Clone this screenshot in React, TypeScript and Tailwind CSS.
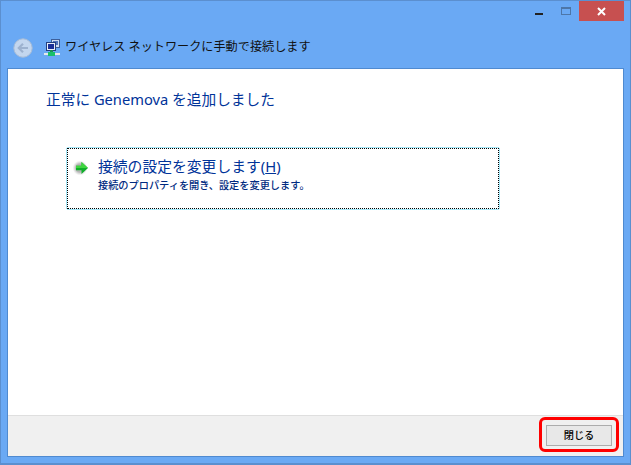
import React from 'react';

const font = { fontFamily: '"Noto Sans", "Noto Sans CJK JP", sans-serif' };

const NetworkIcon = () => (
  <svg width="16" height="17" viewBox="0 0 16 17" className="shrink-0">
    <rect x="7.5" y="0.5" width="8" height="8" fill="#cfdcf0" stroke="#3d5f9a" />
    <rect x="9" y="2" width="5" height="4" fill="#4f74bd" />
    <rect x="2.5" y="3.5" width="9" height="8" fill="#e8eef8" stroke="#24407f" />
    <rect x="4" y="5" width="6" height="5" fill="#1a2f96" />
    <rect x="6" y="11" width="3" height="3" fill="#1d8f58" />
    <rect x="0" y="14" width="16" height="2" fill="#e6e9ea" />
    <rect x="4" y="13" width="7" height="4" fill="#19c06a" />
  </svg>
);

const BackIcon = () => (
  <svg width="20" height="20" viewBox="0 0 20 20" className="shrink-0">
    <circle cx="10" cy="10" r="9.2" fill="#c3d6ee" stroke="#a8bcd6" />
    <path d="M15 10H6M10 5.8L5.8 10l4.2 4.2" fill="none" stroke="#9db2cf" strokeWidth="2.2" />
  </svg>
);

const GreenArrow = () => (
  <svg width="18" height="16" viewBox="0 0 18 16" className="shrink-0">
    <defs>
      <radialGradient id="arrowGlow">
        <stop offset="55%" stopColor="#8d8d8d" stopOpacity={0.65} />
        <stop offset="100%" stopColor="#bdbdbd" stopOpacity={0} />
      </radialGradient>
    </defs>
    <circle cx="7" cy="8" r="7.5" fill="url(#arrowGlow)" />
    <path d="M3 5.8h5.5V2L15 8l-6.5 6v-3.8H3z" fill="#0fae2a" />
    <path d="M3 5.8h5.5V2L15 8H3z" fill="#3fd63f" />
  </svg>
);

export default function App() {
  return (
    <div className="relative flex h-[465px] w-[631px] flex-col overflow-hidden border border-b-2 border-[#5b8fcf] bg-[#6aa9f4] pb-[6px] pl-[6px] pr-[6px]" style={font}>
      {/* window buttons */}
      <div className="flex h-[20px] shrink-0 items-start justify-end">
        <div className="mt-[12px] mr-[18px] h-[2px] w-[8px] bg-[#222222]" />
        <div className="mt-[6px] mr-[8px] h-[8px] w-[10px] border border-t-2 border-[#4d76a8]" />
        <div className="flex h-[20px] w-[45px] items-center justify-center bg-[#c75050]">
          <svg width="9" height="9" viewBox="0 0 9 9">
            <path d="M1 1l7 7M8 1L1 8" stroke="#ffffff" strokeWidth="2" />
          </svg>
        </div>
      </div>

      {/* header row */}
      <div className="flex h-[47px] shrink-0 items-center pt-[6px] pl-[6px]">
        <BackIcon />
        <div className="ml-[11px]"><NetworkIcon /></div>
        <span className="ml-[5px] text-[12.15px] whitespace-nowrap text-[#111111]">ワイヤレス ネットワークに手動で接続します</span>
      </div>

      {/* content */}
      <div className="flex flex-1 flex-col border border-[#4f8ad0] bg-white">
        <div className="flex-1 pt-[19px] pl-[38px]">
          <div className="text-[14.7px] leading-[22px] whitespace-nowrap text-[#003399]">正常に Genemova を追加しました</div>
          <div className="mt-[37px] ml-[20px] w-[434px] rounded-[2px] border border-[#a6e8f8] bg-white">
            <div className="flex h-[61px] items-start border border-dotted border-black pt-[7px] pl-[5px]">
              <div className="mt-[4px]"><GreenArrow /></div>
              <div className="ml-[7px]">
                <div className="text-[14.8px] leading-[20px] whitespace-nowrap text-[#003399]">
                  接続の設定を変更します(<span className="underline">H</span>)
                </div>
                <div className="mt-[3px] text-[10.2px] leading-[13px] font-medium whitespace-nowrap text-[#002a80]">接続のプロパティを開き、設定を変更します。</div>
              </div>
            </div>
          </div>
        </div>
        <div className="flex h-[41px] shrink-0 items-start justify-end border-t border-[#dfdfdf] bg-[#f0f0f0] pt-[9px] pr-[11px]">
          <button className="h-[21px] w-[66px] border border-[#acacac] bg-[#e8e8e8] text-[10.2px] leading-[19px] font-medium text-black">閉じる</button>
        </div>
      </div>

      {/* red highlight */}
      <div className="absolute top-[416px] left-[538px] h-[35px] w-[80px] rounded-[6px] border-[3px] border-[#ff0000]" />
    </div>
  );
}
